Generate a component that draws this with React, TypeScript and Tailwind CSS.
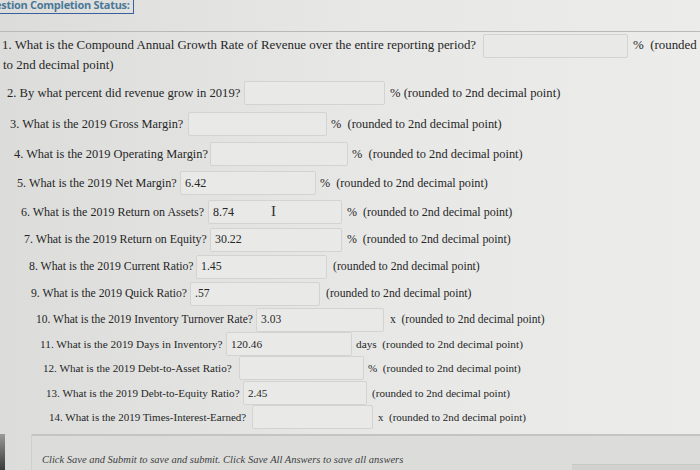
const ROWS = [
  {
    pad: "pl-[7px]",
    label: "2. By what percent did revenue grow in 2019?",
    labelW: "w-[237px]",
    text: "text-[12.6px]",
    value: "",
    inputW: "w-[141px]",
    gap: "ml-[5px]",
    suffix: "% (rounded to 2nd decimal point)",
    mt: "mt-[8px]",
  },
  {
    pad: "pl-[10px]",
    label: "3. What is the 2019 Gross Margin?",
    labelW: "w-[178px]",
    text: "text-[12.4px]",
    value: "",
    inputW: "w-[139px]",
    gap: "ml-[4px]",
    suffix: "%  (rounded to 2nd decimal point)",
    mt: "mt-[7px]",
  },
  {
    pad: "pl-[14px]",
    label: "4. What is the 2019 Operating Margin?",
    labelW: "w-[196px]",
    text: "text-[12.4px]",
    value: "",
    inputW: "w-[138px]",
    gap: "ml-[4px]",
    suffix: "%  (rounded to 2nd decimal point)",
    mt: "mt-[6px]",
  },
  {
    pad: "pl-[17px]",
    label: "5. What is the 2019 Net Margin?",
    labelW: "w-[163px]",
    text: "text-[12.2px]",
    value: "6.42",
    inputW: "w-[136px]",
    gap: "ml-[4px]",
    suffix: "%  (rounded to 2nd decimal point)",
    mt: "mt-[5px]",
  },
  {
    pad: "pl-[21px]",
    label: "6. What is the 2019 Return on Assets?",
    labelW: "w-[187px]",
    text: "text-[12px]",
    value: "8.74",
    inputW: "w-[134px]",
    gap: "ml-[5px]",
    suffix: "%  (rounded to 2nd decimal point)",
    mt: "mt-[5px]",
    cursor: true,
  },
  {
    pad: "pl-[24px]",
    label: "7. What is the 2019 Return on Equity?",
    labelW: "w-[186px]",
    text: "text-[11.9px]",
    value: "30.22",
    inputW: "w-[132px]",
    gap: "ml-[5px]",
    suffix: "%  (rounded to 2nd decimal point)",
    mt: "mt-[4px]",
  },
  {
    pad: "pl-[29px]",
    label: "8. What is the 2019 Current Ratio?",
    labelW: "w-[167px]",
    text: "text-[11.8px]",
    value: "1.45",
    inputW: "w-[131px]",
    gap: "ml-[6px]",
    suffix: "(rounded to 2nd decimal point)",
    mt: "mt-[3px]",
  },
  {
    pad: "pl-[31px]",
    label: "9. What is the 2019 Quick Ratio?",
    labelW: "w-[159px]",
    text: "text-[11.7px]",
    value: ".57",
    inputW: "w-[130px]",
    gap: "ml-[6px]",
    suffix: "(rounded to 2nd decimal point)",
    mt: "mt-[3px]",
  },
  {
    pad: "pl-[36px]",
    label: "10. What is the 2019 Inventory Turnover Rate?",
    labelW: "w-[220px]",
    text: "text-[11.5px]",
    value: "3.03",
    inputW: "w-[128px]",
    gap: "ml-[6px]",
    suffix: "x  (rounded to 2nd decimal point)",
    mt: "mt-[2px]",
  },
  {
    pad: "pl-[40px]",
    label: "11. What is the 2019 Days in Inventory?",
    labelW: "w-[186px]",
    text: "text-[11.3px]",
    value: "120.46",
    inputW: "w-[126px]",
    gap: "ml-[4px]",
    suffix: "days  (rounded to 2nd decimal point)",
    mt: "mt-0",
  },
  {
    pad: "pl-[43px]",
    label: "12. What is the 2019 Debt-to-Asset Ratio?",
    labelW: "w-[196px]",
    text: "text-[11.1px]",
    value: "",
    inputW: "w-[125px]",
    gap: "ml-[4px]",
    suffix: "%  (rounded to 2nd decimal point)",
    mt: "mt-0",
  },
  {
    pad: "pl-[46px]",
    label: "13. What is the 2019 Debt-to-Equity Ratio?",
    labelW: "w-[197px]",
    text: "text-[11.1px]",
    value: "2.45",
    inputW: "w-[124px]",
    gap: "ml-[5px]",
    suffix: "(rounded to 2nd decimal point)",
    mt: "mt-px",
  },
  {
    pad: "pl-[49px]",
    label: "14. What is the 2019 Times-Interest-Earned?",
    labelW: "w-[203px]",
    text: "text-[11px]",
    value: "",
    inputW: "w-[121px]",
    gap: "ml-[5px]",
    suffix: "x  (rounded to 2nd decimal point)",
    mt: "mt-0",
  },
];

function Field({ value, width, cursor }: { value: string; width: string; cursor?: boolean }) {
  return (
    <div
      className={`relative ${width} h-[24px] shrink-0 flex items-center pl-[4px] border border-[#d3d4d1] bg-[#e9eae8] rounded-[2px]`}
    >
      {value}
      {cursor ? (
        <span className="absolute left-[62px] top-[3px] text-[15px] leading-none font-light text-[#333]">
          I
        </span>
      ) : null}
    </div>
  );
}

export default function App() {
  return (
    <div
      className="w-[700px] h-[470px] overflow-hidden flex flex-col bg-linear-to-r from-[#dcdddb] via-[#e7e8e6] to-[#ecedeb] text-[#262626]"
      style={{ fontFamily: '"Liberation Serif", "Times New Roman", serif' }}
    >
      {/* header */}
      <div className="h-[32px] shrink-0 flex items-start border-b border-[#b9bab8]">
        <div
          className="-mt-[3px] pr-[3px] pb-px border border-[#3a5f9e] border-l-0 text-[11px] font-bold leading-[14px] tracking-tight text-[#4a7898] whitespace-nowrap"
          style={{ fontFamily: '"Open Sans", "Liberation Sans", sans-serif' }}
        >
          <span className="-ml-[5px]">estion Completion Status:</span>
        </div>
      </div>

      {/* question 1 wraps */}
      <div className="mt-[2px] h-[24px] shrink-0 flex items-center pl-[2px] text-[12.9px] whitespace-nowrap">
        <span className="w-[481px] shrink-0">
          1. What is the Compound Annual Growth Rate of Revenue over the entire reporting period?
        </span>
        <Field value="" width="w-[145px]" />
        <span className="ml-[5px]">% &nbsp;(rounded</span>
      </div>
      <div className="mt-px h-[14px] shrink-0 flex items-center pl-[3px] text-[12.9px]">
        to 2nd decimal point)
      </div>

      {ROWS.map((r) => (
        <div
          key={r.label}
          className={`${r.mt} ${r.pad} ${r.text} h-[24px] shrink-0 flex items-center whitespace-nowrap`}
        >
          <span className={`${r.labelW} shrink-0`}>{r.label}</span>
          <Field value={r.value} width={r.inputW} cursor={r.cursor} />
          <span className={r.gap} style={{ whiteSpace: "pre" }}>
            {r.suffix}
          </span>
        </div>
      ))}

      {/* bottom bar */}
      <div className="mt-[5px] flex-1 flex">
        <div className="w-[5px] bg-linear-to-b from-[#9a9b9a] to-[#3a3b3a]" />
        <div className="w-[27px] border-r border-[#cfd0ce]" />
        <div className="flex-1 flex flex-col border-t-2 border-[#c4c5c3] bg-[#dcdddb]">
          <div className="flex-1" />
          <div className="flex items-end">
            <span
              className="pl-[10px] pb-[2px] text-[10.5px] italic text-[#3e3e3e]"
              style={{ fontFamily: '"Liberation Serif", serif' }}
            >
              Click Save and Submit to save and submit. Click Save All Answers to save all answers
            </span>
            <div className="ml-auto w-[128px] h-[6px] bg-[#d1d2d0] border-t border-[#c8c9c7]" />
          </div>
        </div>
      </div>
    </div>
  );
}
